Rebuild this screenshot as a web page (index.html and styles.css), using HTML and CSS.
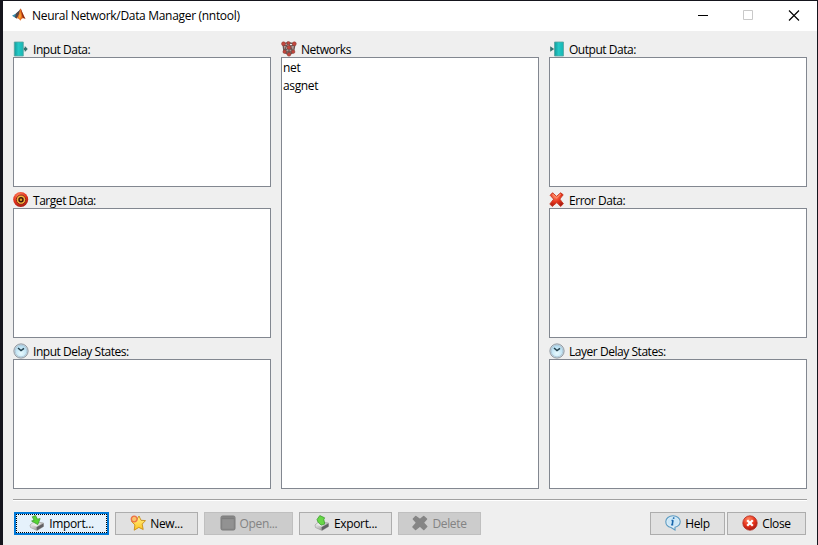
FILE: index.html
```html
<!DOCTYPE html>
<html lang="en">
<head>
<meta charset="utf-8">
<title>Neural Network/Data Manager (nntool)</title>
<link rel="stylesheet" href="styles.css">
</head>
<body>
<svg class="defs" aria-hidden="true">
  <defs>
    <linearGradient id="teal"><stop offset="0" stop-color="#139c9c"/><stop offset=".45" stop-color="#25c9c6"/><stop offset="1" stop-color="#16b5b3"/></linearGradient>
    <radialGradient id="red" cx=".4" cy=".25" r=".8"><stop offset="0" stop-color="#ff8764"/><stop offset=".55" stop-color="#e6331c"/><stop offset="1" stop-color="#a01812"/></radialGradient>
    <radialGradient id="face" cx=".5" cy=".7" r=".6"><stop offset="0" stop-color="#e9fbff"/><stop offset="1" stop-color="#b7ddf0"/></radialGradient>
    <linearGradient id="tray" x2="1" y2="1"><stop offset="0" stop-color="#fff"/><stop offset=".55" stop-color="#bbb"/><stop offset="1" stop-color="#555"/></linearGradient>
    <linearGradient id="star" x2="0" y2="1"><stop offset="0" stop-color="#fff28c"/><stop offset="1" stop-color="#ffc51d"/></linearGradient>
    <symbol id="clock" viewBox="0 0 16 16">
      <circle cx="8" cy="8" r="7.1" fill="#dce3e8" stroke="#8b959e" stroke-width="1"/>
      <circle cx="8" cy="8" r="5.9" fill="url(#face)" stroke="#9fbfd2" stroke-width=".7"/>
      <path d="M5 5 8 7.6l3-2.3" fill="none" stroke="#24414f" stroke-width="1.5"/>
    </symbol>
    <symbol id="tray-base" viewBox="0 0 16 16">
      <path d="M1 10 5 6.5 14.5 8v3.5L8 15.5 1.5 12.5z" fill="url(#tray)" stroke="#999" stroke-width=".6"/>
      <path d="M7.5 12.2 14.4 8.4v3L8 15.3z" fill="#606064"/>
      <path d="M2.5 9.8 5.5 7.5l6.5 1.1-4.6 3z" fill="#e9e9e9"/>
    </symbol>
  </defs>
</svg>
<div class="window">
  <header class="titlebar">
    <svg class="logo" viewBox="0 0 14 14">
      <path d="M0 7.7 4 5.5 6.8 3l.6 4L4.5 10.6z" fill="#318cae"/>
      <path d="M4 5.500 7 2.800 8.500.5 7.400 6 4.700 10.400 3 9.300z" fill="#574443"/>
      <path d="M8.500.5c1.500 2 2.400 6.500 5 10.200-2-1.200-3.600-.7-5.200 2.100C7.500 10.800 6.300 10 4.700 10.200 7 8 7.500 3 8.500.5z" fill="#e66a1d"/>
      <path d="M8.500.5c1.500 2 2.400 6.500 5 10.200L10.800 10C9.800 7 9.300 3 8.500.5z" fill="#8f2c18"/>
      <path d="M8.300 4 9 8.500 8 11 6.600 9.300z" fill="#f6a735"/>
    </svg>
    <h1 class="title">Neural Network/Data Manager (nntool)</h1>
    <svg class="controls" viewBox="0 0 102 12">
      <path d="M0 5.500h10" stroke="#000"/>
      <path d="M45.500.5h9v9h-9z" fill="none" stroke="#c9c9c9"/>
      <path d="m91 .5 10 10M101 .5 91 10.500" stroke="#000" stroke-width="1.150"/>
    </svg>
  </header>
  <main class="panels">
    <section class="column">
      <div class="group">
        <h2 class="label"><svg class="icon" viewBox="0 0 16 16"><path d="M1.300 1h9v14h-9z" fill="url(#teal)" stroke="#5aa3a0" stroke-width=".8"/><path d="M10.800 6.800h1V5l3 3-3 3V9.200h-1z" fill="#39716f"/></svg><span>Input Data:</span></h2>
        <div class="list"></div>
      </div>
      <div class="group">
        <h2 class="label"><svg class="icon" viewBox="0 0 16 16"><circle cx="7.700" cy="7.500" r="7.500" fill="url(#red)"/><circle cx="8" cy="7.700" r="4.700" fill="#f4b33d" stroke="#8e2716"/><circle cx="8" cy="7.700" r="2" fill="#e29a20" stroke="#39170d" stroke-width="1.500"/></svg><span>Target Data:</span></h2>
        <div class="list"></div>
      </div>
      <div class="group">
        <h2 class="label"><svg class="icon"><use href="#clock"/></svg><span>Input Delay States:</span></h2>
        <div class="list"></div>
      </div>
    </section>
    <section class="column">
      <div class="group">
        <h2 class="label networks"><svg class="icon" viewBox="0 0 16 16"><path d="M2 3 7 1.500 14 3 12.500 11 8 14 3 11zL8 6 14 3M8 6v8M3 11 8 6l4.500 5M7 1.500 3 11h9.500z" fill="#b09a97" stroke="#6b5552" stroke-width="1.300"/><g fill="#c3473e" stroke="#8c3a34" stroke-width=".5"><circle cx="2.500" cy="2.800" r="2"/><circle cx="7.500" cy="2" r="1.600"/><circle cx="13.300" cy="2.800" r="2"/><circle cx="8" cy="6.400" r="1.900"/><circle cx="3.600" cy="10.800" r="1.700"/><circle cx="12.200" cy="10.800" r="1.700"/><circle cx="8" cy="13.400" r="1.800"/></g></svg><span>Networks</span></h2>
        <ul class="list"><li>net</li><li>asgnet</li></ul>
      </div>
    </section>
    <section class="column">
      <div class="group">
        <h2 class="label"><svg class="icon" viewBox="0 0 16 16"><path d="M5.500 1h9v14h-9z" fill="url(#teal)" stroke="#5aa3a0" stroke-width=".8"/><path d="M1.200 5.200 5.200 8l-4 2.800z" fill="#39716f"/></svg><span>Output Data:</span></h2>
        <div class="list"></div>
      </div>
      <div class="group">
        <h2 class="label"><svg class="icon" viewBox="0 0 16 16"><path d="M3.500.8 7.600 4.400 11.700.8 14.200 2.800 10.800 7.100l3.600 4.700-2.700 2.600L7.800 10.600l-4.600 3.800L.8 12 4.700 7.200 1.200 3.300z" fill="url(#red)" stroke="#c93b25" stroke-width="1" stroke-linejoin="round"/><path d="m3.500 2.200 4.200 3.700 3.900-3.800" fill="none" stroke="#ff8a67" stroke-width="1.200"/></svg><span>Error Data:</span></h2>
        <div class="list"></div>
      </div>
      <div class="group">
        <h2 class="label"><svg class="icon"><use href="#clock"/></svg><span>Layer Delay States:</span></h2>
        <div class="list"></div>
      </div>
    </section>
  </main>
  <footer class="actions">
    <button class="btn import focused"><svg class="icon"><use href="#tray-base"/><path d="M3.300 1.800 6.500.5l2 3.700 2.600-.6-2.300 6L2.600 6l2.500-.7z" fill="#55d434" stroke="#3c9c2e" stroke-width=".8"/></svg><span>Import...</span></button>
    <button class="btn new"><svg class="icon" viewBox="0 0 16 16"><path d="m9 1 2 4.300 4.500.3-3.300 3.500 1 5.400-4.400-2.100-4.600 2.800.7-5.300L1.500 6.400 6.500 5z" fill="url(#star)" stroke="#c78c17" stroke-width=".9"/><circle cx="4.200" cy="4" r="2.900" fill="#f8c46b" stroke="#ed7044" stroke-width="1.400"/></svg><span>New...</span></button>
    <button class="btn open" disabled><svg class="icon" viewBox="0 0 16 16"><rect x="1" y="1" width="14" height="14" rx="1.500" fill="#898989" stroke="#7b7b7b"/><path d="M2 3.300h12" stroke="#7b7b7b"/><path d="M2.500 4.500h11v9h-11z" fill="#929292"/></svg><span>Open...</span></button>
    <button class="btn export"><svg class="icon"><use href="#tray-base"/><path d="M3 4.500 5.800.6l4.800 2.200-.8 1.800 1 4.400-3.800 1.100-3-3z" fill="#67d747" stroke="#3c9c2e" stroke-width=".8"/></svg><span>Export...</span></button>
    <button class="btn delete" disabled><svg class="icon" viewBox="0 0 16 16"><path d="M3.800 1.500 8 4.600l3.700-3.100L14.500 4l-3.300 3.700 3.500 3.800-2.900 2.900L8 11l-4.400 3.400L1 12l3.700-4.300L1.400 4z" fill="#858585" stroke="#858585" stroke-width="1.500" stroke-linejoin="round"/></svg><span>Delete</span></button>
    <button class="btn help"><svg class="icon" viewBox="0 0 16 16"><path d="M8 .8c4 0 7.200 2.500 7.200 5.800 0 3-2.300 5-5.200 5.700V15l-4-2.500C3 12 .8 9.800.8 6.600.8 3.300 4 .8 8 .8z" fill="#ddecf6" stroke="#5b9bc2" stroke-width="1.100"/><ellipse cx="8" cy="6.500" rx="5.500" ry="4.500" fill="#cbe7f7"/><path d="M8.800 2.400 8.500 3.900M8 5.200 7.200 9.800M6.500 5.500H8M6.200 9.800h2" stroke="#1765ab" stroke-width="1.600"/></svg><span>Help</span></button>
    <button class="btn close"><svg class="icon" viewBox="0 0 16 16"><circle cx="8" cy="8" r="7.200" fill="url(#red)" stroke="#b12b20" stroke-width=".8"/><path d="m5.200 5.200 5.600 5.600m0-5.600-5.600 5.600" stroke="#fff" stroke-width="2.300"/></svg><span>Close</span></button>
  </footer>
</div>
</body>
</html>
```
FILE: styles.css
```css
* { box-sizing: border-box; }
body {
  margin: 0;
  height: 545px;
  padding: 1px 1px 0 3px;
  overflow: hidden;
  background: #15151d;
  color: #000;
  font: 12px/16px "Open Sans", "Noto Sans", sans-serif;
  letter-spacing: -0.35px;
}
.defs { position: absolute; width: 0; height: 0; }
.window { height: 544px; background: #efefef; }
.titlebar {
  display: flex;
  align-items: center;
  height: 30px;
  padding: 0 17px 0 9px;
  background: #fff;
}
.logo { width: 14px; height: 14px; margin: -2px 6px 0 0; }
.title { margin: 0; font: inherit; letter-spacing: -0.31px; white-space: nowrap; }
.controls { width: 102px; height: 12px; margin-left: auto; }
.panels {
  display: grid;
  grid-template-columns: repeat(3, 258px);
  gap: 10px;
  height: 458px;
  padding-left: 10px;
}
.column { display: flex; flex-direction: column; padding-top: 5px; }
.group { display: flex; flex: 1; flex-direction: column; }
.label {
  display: flex;
  align-items: center;
  height: 21px;
  margin: 0;
  padding-top: 7px;
  font: inherit;
  letter-spacing: -0.46px;
  white-space: nowrap;
}
.label.networks { letter-spacing: -0.45px; }
.icon { flex: none; width: 16px; height: 16px; }
.label .icon { margin: -3px 4px 0 0; }
.list {
  flex: 1;
  margin: 0;
  padding: 1px;
  border: 1px solid #828790;
  background: #fff;
  list-style: none;
}
.list li { height: 18px; line-height: 18px; }
.actions {
  display: flex;
  gap: 6px;
  width: 794px;
  margin: 10px 0 0 10px;
  padding: 12px 1px 0;
  border-top: 1px solid #a0a0a0;
  box-shadow: inset 0 1px #fff;
}
.btn {
  display: flex;
  align-items: center;
  justify-content: center;
  gap: 4px;
  height: 23px;
  padding: 0;
  border: 1px solid #adadad;
  background: #e1e1e1;
  color: #000;
  font: inherit;
  letter-spacing: inherit;
  white-space: nowrap;
}
.btn .icon { margin-top: -2px; }
.btn:disabled { border-color: #bfbfbf; background: #ccc; color: #838383; }
.focused {
  border: 2px solid #0078d7;
  background: #e5f1fb;
  outline: 1px dotted #000;
  outline-offset: -3px;
}
.import { width: 95px; }
.new { width: 83px; }
.open { width: 89px; }
.export { width: 93px; }
.delete { width: 83px; }
.help { width: 75px; margin-left: auto; }
.close { width: 79px; margin-left: -4px; }
```
